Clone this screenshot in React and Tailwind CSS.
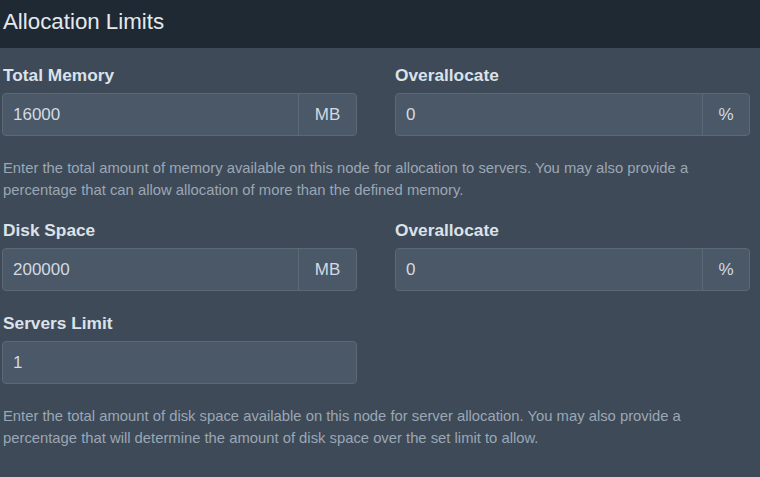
export default function App() {
  const font = { fontFamily: '"Liberation Sans", Arial, sans-serif' };
  const Label = ({ children }) => (
    <div className="h-[24px] leading-[24px] text-[17.3px] font-bold text-[#dbe2ea] mb-[7px] pt-[1px]">{children}</div>
  );
  const Input = ({ value, addon, addonW }) => (
    <div className="flex h-[43px] rounded-[4px] border border-[#5b6876] bg-[#4a5867] overflow-hidden">
      <div className="flex-1 flex items-center pl-[10px] text-[17px] text-[#d3dae2]">{value}</div>
      {addon && (
        <div className={`flex items-center justify-center border-l border-[#5b6876] text-[17px] text-[#d3dae2] ${addonW}`}>
          {addon}
        </div>
      )}
    </div>
  );
  return (
    <div style={font} className="w-[760px] h-[477px] bg-[#3e4a58] overflow-hidden">
      <div className="h-[48px] bg-[#1f2933] flex items-center px-[3px] pb-[4px] text-[22.3px] text-[#e4e9ee]">
        Allocation Limits
      </div>
      <div className="pl-[2px] pt-[14px]">
        <div className="grid grid-cols-[355px_355px] gap-x-[38px]">
          <div>
            <div className="pl-[1px]"><Label>Total Memory</Label></div>
            <Input value="16000" addon="MB" addonW="w-[58px]" />
          </div>
          <div>
            <Label>Overallocate</Label>
            <Input value="0" addon="%" addonW="w-[47px]" />
          </div>
        </div>
        <p className="mt-[21px] text-[14.8px] leading-[22px] text-[#9ba7b4] pl-[1px] pr-[10px]">
          Enter the total amount of memory available on this node for allocation to servers. You may also provide a percentage that can allow allocation of more than the defined memory.
        </p>
        <div className="grid grid-cols-[355px_355px] gap-x-[38px] mt-[16px]">
          <div>
            <div className="pl-[1px]"><Label>Disk Space</Label></div>
            <Input value="200000" addon="MB" addonW="w-[58px]" />
          </div>
          <div>
            <Label>Overallocate</Label>
            <Input value="0" addon="%" addonW="w-[47px]" />
          </div>
        </div>
        <div className="mt-[19px] w-[355px]">
          <div className="pl-[1px]"><Label>Servers Limit</Label></div>
          <Input value="1" />
        </div>
        <p className="mt-[21px] text-[14.8px] leading-[22px] text-[#9ba7b4] pl-[1px] pr-[10px]">
          Enter the total amount of disk space available on this node for server allocation. You may also provide a percentage that will determine the amount of disk space over the set limit to allow.
        </p>
      </div>
    </div>
  );
}
